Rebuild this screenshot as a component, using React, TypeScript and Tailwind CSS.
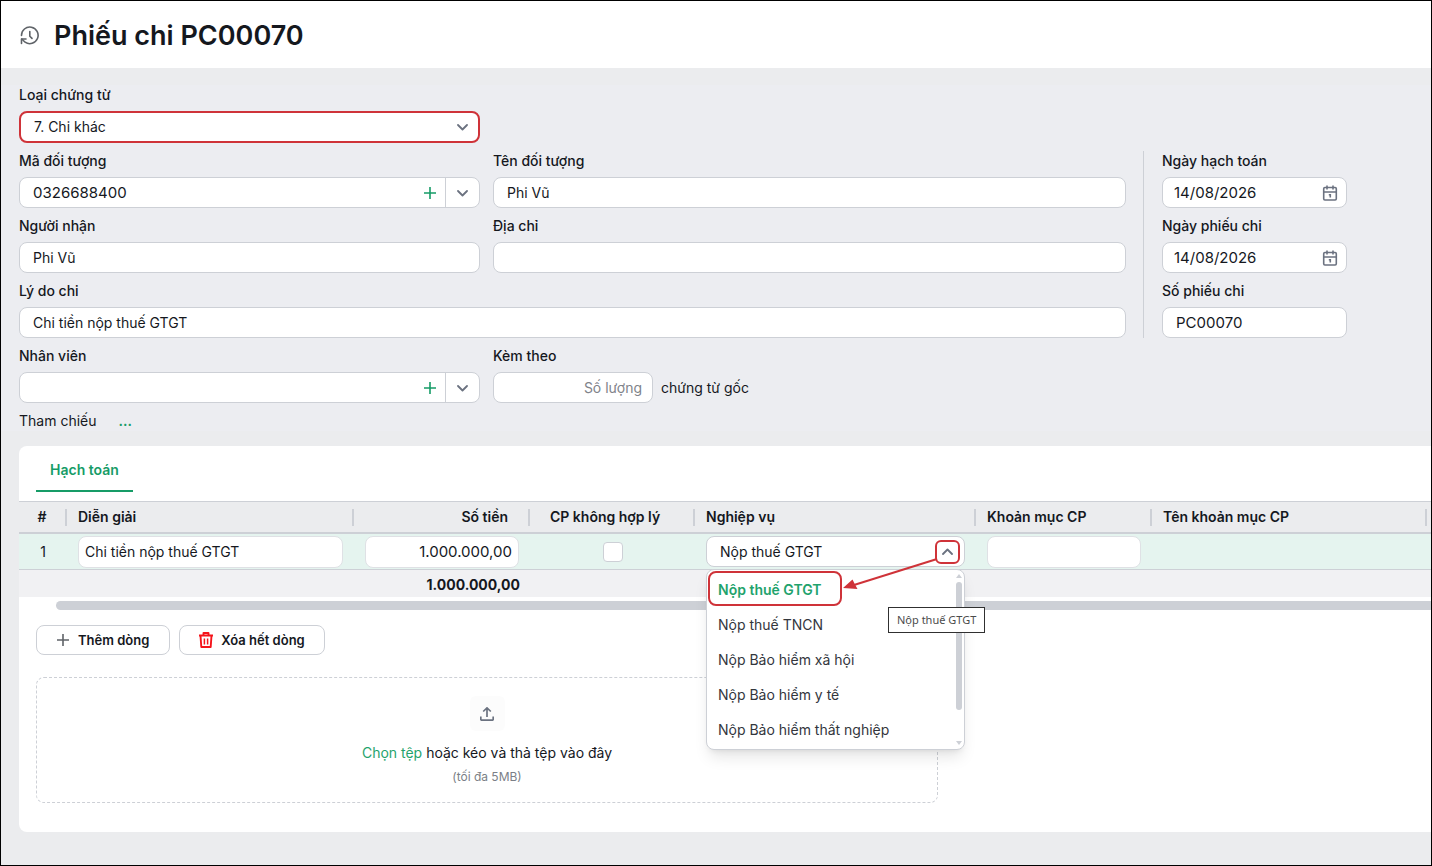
import { useState } from "react";
import type { ReactNode } from "react";
import clsx from "clsx";

const OPTIONS = [
  "Nộp thuế GTGT",
  "Nộp thuế TNCN",
  "Nộp Bảo hiểm xã hội",
  "Nộp Bảo hiểm y tế",
  "Nộp Bảo hiểm thất nghiệp",
];

const COLUMNS = [
  { label: "#", width: 48, className: "justify-center" },
  { label: "Diễn giải", width: 287, className: "pl-[11px]" },
  { label: "Số tiền", width: 176, className: "justify-end pr-5" },
  { label: "CP không hợp lý", width: 165, className: "pl-5" },
  { label: "Nghiệp vụ", width: 281, className: "pl-[11px]" },
  { label: "Khoản mục CP", width: 176, className: "pl-[11px]" },
  { label: "Tên khoản mục CP", width: 275, className: "pl-[11px]" },
];

const box = "h-[31px] w-full rounded-lg border border-[#cdd0d6] bg-white";
const cellBox = "block h-8 w-full rounded-lg border border-[#dfe1e5] bg-white";

function HistoryIcon() {
  return (
    <svg width="20" height="20" viewBox="0 0 20 20" fill="none" stroke="#5f6368" strokeWidth="1.6" strokeLinecap="round" strokeLinejoin="round">
      <path d="M1.500 9.500a8.300 8.300 0 1 1 3.600 6.700L1.800 13" />
      <path d="M1.500 17.500V13h4.500" />
      <path d="M9.800 5.500v4.700l2.200 2.200" />
    </svg>
  );
}

function Chevron({ up = false }: { up?: boolean }) {
  return (
    <svg width="12" height="12" viewBox="0 0 12 12" fill="none" stroke="#6b7280" strokeWidth="1.8" strokeLinecap="round" strokeLinejoin="round">
      <path d={up ? "M1 8 5.500 3.500 10 8" : "M1 4l4.500 4.500L10 4"} />
    </svg>
  );
}

function Plus({ color }: { color: string }) {
  return (
    <svg width="12" height="12" viewBox="0 0 12 12" fill="none" stroke={color} strokeWidth="1.6">
      <path d="M6 0v12M0 6h12" />
    </svg>
  );
}

function CalendarIcon() {
  return (
    <svg width="16" height="16" viewBox="0 0 16 16" fill="none" stroke="#6b7280" strokeWidth="1.6">
      <rect x="1.7" y="2.5" width="12.600" height="12.500" rx="1.200" />
      <path d="M1.700 7h12.600M5 .5v4M11 .5v4" />
      <path d="M6.800 9.800h1.500v2.700" />
    </svg>
  );
}

function Field({ id, label, children }: { id: string; label: string; children: ReactNode }) {
  return (
    <div className="flex flex-col gap-1.5">
      <label htmlFor={id} className="h-5 leading-5 font-medium">
        {label}
      </label>
      {children}
    </div>
  );
}

function LookupField({ id, label, value }: { id: string; label: string; value: string }) {
  return (
    <Field id={id} label={label}>
      <div className={clsx(box, "flex items-stretch")}>
        <input id={id} defaultValue={value} className="min-w-0 flex-1 rounded-l-lg pl-[13px] text-[15px] outline-none" />
        <button type="button" aria-label="Thêm mới" className="flex w-[30px] items-center justify-center">
          <Plus color="#169c67" />
        </button>
        <button type="button" aria-label="Mở danh sách" className="flex w-[34px] items-center justify-center border-l border-[#cdd0d6]">
          <Chevron />
        </button>
      </div>
    </Field>
  );
}

function DateField({ id, label, value }: { id: string; label: string; value: string }) {
  return (
    <Field id={id} label={label}>
      <div className={clsx(box, "flex items-center")}>
        <input id={id} defaultValue={value} className="min-w-0 flex-1 pl-[11px] text-[15px] outline-none" />
        <button type="button" aria-label="Chọn ngày" className="px-2">
          <CalendarIcon />
        </button>
      </div>
    </Field>
  );
}

function BusinessSelect() {
  const [open, setOpen] = useState(true);
  const [selected, setSelected] = useState(OPTIONS[0]);

  return (
    <div className="relative">
      <div className="flex h-[31px] items-center rounded-lg border border-[#cdd0d6] bg-white pr-1">
        <input
          role="combobox"
          aria-label="Nghiệp vụ"
          aria-expanded={open}
          aria-controls="business-list"
          readOnly
          value={selected}
          className="min-w-0 flex-1 pl-[13px] outline-none"
        />
        <button
          type="button"
          aria-label="Mở danh sách nghiệp vụ"
          onClick={() => setOpen(!open)}
          className="flex h-6 w-[25px] items-center justify-center rounded-md border-2 border-[#cf3339]"
        >
          <Chevron up={open} />
        </button>
      </div>
      {open && (
        <div className="absolute inset-x-0 top-full z-10 mt-0.5 flex rounded-lg border border-[#cdd0d6] bg-white shadow-lg">
          <ul id="business-list" role="listbox" className="flex-1 pt-0.5 pb-0.5">
            {OPTIONS.map((option) => (
              <li
                key={option}
                role="option"
                aria-selected={option === selected}
                onClick={() => setSelected(option)}
                className={clsx(
                  "flex h-[35px] cursor-pointer items-center pl-[11px]",
                  option === selected ? "font-semibold text-[#1fa36d]" : "text-[#33363d]"
                )}
              >
                {option}
              </li>
            ))}
          </ul>
          <div className="flex w-2.5 flex-col items-center pt-1 pb-1">
            <svg width="6" height="4" viewBox="0 0 6 4" fill="#cdd0d6">
              <path d="M3 0l3 4H0z" />
            </svg>
            <div className="mt-1 h-32 w-1.5 rounded-full bg-[#cdd0d6]" />
            <svg className="mt-auto" width="6" height="4" viewBox="0 0 6 4" fill="#cdd0d6">
              <path d="M3 4l3-4H0z" />
            </svg>
          </div>
          <div className="pointer-events-none absolute top-px left-px h-[35px] w-[134px] rounded-lg border-2 border-[#cf3339]" />
          <svg className="pointer-events-none absolute -top-4 left-[135px]" width="100" height="40" viewBox="0 0 100 40">
            <path d="M95 5 12 31" stroke="#cf3339" strokeWidth="2" />
            <path d="M1 34 10.500 25.500 13 30.500 15.500 35z" fill="#cf3339" />
          </svg>
          <div
            role="tooltip"
            className="absolute top-[37px] left-[181px] border border-[#303030] bg-white px-2 py-1 font-['Noto_Sans',sans-serif] text-[11px] leading-4 whitespace-nowrap text-[#4b4b4b]"
          >
            {selected}
          </div>
        </div>
      )}
    </div>
  );
}

export default function App() {
  return (
    <div className="min-h-screen overflow-x-hidden border border-black bg-[#ebecee] pb-8 font-[Inter,sans-serif] text-sm text-[#15181e]">
      <header className="flex h-[67px] items-center gap-[14px] bg-white pt-0.5 pl-[19px]">
        <button type="button" aria-label="Lịch sử">
          <HistoryIcon />
        </button>
        <h1 className="text-[27px] leading-8 font-semibold">Phiếu chi PC00070</h1>
      </header>

      <form className="mt-[17px] bg-[#ecedf1] pr-[84px] pl-[18px]">
        <div className="flex gap-[17px]">
          <div className="min-w-0 flex-1 space-y-2">
            <div className="grid grid-cols-[461fr_633fr] gap-x-[13px] gap-y-2">
              <Field id="type" label="Loại chứng từ">
                <div className="relative">
                  <select
                    id="type"
                    className="block h-8 w-full appearance-none rounded-lg border-2 border-[#cf3339] bg-white pl-[13px]"
                  >
                    <option>7. Chi khác</option>
                  </select>
                  <span className="pointer-events-none absolute inset-y-0 right-[11px] flex items-center">
                    <Chevron />
                  </span>
                </div>
              </Field>
              <div />
              <LookupField id="code" label="Mã đối tượng" value="0326688400" />
              <Field id="name" label="Tên đối tượng">
                <input id="name" defaultValue="Phi Vũ" className={clsx(box, "px-[13px]")} />
              </Field>
              <Field id="receiver" label="Người nhận">
                <input id="receiver" defaultValue="Phi Vũ" className={clsx(box, "px-[13px]")} />
              </Field>
              <Field id="address" label="Địa chỉ">
                <input id="address" className={clsx(box, "px-[13px]")} />
              </Field>
            </div>
            <Field id="reason" label="Lý do chi">
              <input id="reason" defaultValue="Chi tiền nộp thuế GTGT" className={clsx(box, "px-[13px]")} />
            </Field>
            <div className="grid grid-cols-[461fr_633fr] gap-x-[13px]">
              <LookupField id="staff" label="Nhân viên" value="" />
              <Field id="attached" label="Kèm theo">
                <div className="flex items-center gap-2">
                  <div className="w-40">
                    <input id="attached" placeholder="Số lượng" className={clsx(box, "px-2.5 text-right placeholder:text-[#80838a]")} />
                  </div>
                  <span>chứng từ gốc</span>
                </div>
              </Field>
            </div>
          </div>

          <div className="mt-[66px] self-start border-l border-[#cdd0d6] pl-[18px]">
            <div className="flex w-[185px] flex-col gap-2">
              <DateField id="posted" label="Ngày hạch toán" value="14/08/2026" />
              <DateField id="issued" label="Ngày phiếu chi" value="14/08/2026" />
              <Field id="number" label="Số phiếu chi">
                <input id="number" defaultValue="PC00070" className={clsx(box, "px-[13px] text-[15px]")} />
              </Field>
            </div>
          </div>
        </div>
        <div className="mt-2 flex gap-[22px] leading-5">
          <span>Tham chiếu</span>
          <button type="button" aria-label="Chọn chứng từ tham chiếu" className="font-semibold text-[#169c67]">
            ...
          </button>
        </div>
      </form>

      <section className="mt-[15px] ml-[18px] rounded-l-lg bg-white pb-[29px]">
        <div role="tablist" className="flex h-[55px] pl-[17px]">
          <button role="tab" aria-selected="true" type="button" className="h-[46px] border-b-2 border-[#169c67] px-[14px] pt-1 font-semibold text-[#169c67]">
            Hạch toán
          </button>
        </div>

        <table className="w-full table-fixed border-separate border-spacing-0">
          <colgroup>
            {COLUMNS.map((c) => (
              <col key={c.label} style={{ width: c.width }} />
            ))}
            <col />
          </colgroup>
          <thead>
            <tr className="bg-[#ebecee]">
              {COLUMNS.map((c) => (
                <th key={c.label} className="h-[33px] border-t border-b-2 border-[#cdd0d6] p-0 font-semibold">
                  <div className={clsx("flex h-[17px] items-center border-r-2 border-[#cdd0d6]", c.className)}>{c.label}</div>
                </th>
              ))}
              <th className="border-t border-b-2 border-[#cdd0d6] p-0" />
            </tr>
          </thead>
          <tbody>
            <tr className="h-9 bg-[#e5f4ef] [&>td]:border-b [&>td]:border-[#cdd0d6] [&>td]:px-[11px] [&>td]:py-0">
              <td className="text-center">1</td>
              <td>
                <input aria-label="Diễn giải" defaultValue="Chi tiền nộp thuế GTGT" className={clsx(cellBox, "px-1.5")} />
              </td>
              <td>
                <input aria-label="Số tiền" defaultValue="1.000.000,00" className={clsx(cellBox, "px-1.5 text-right text-[15px]")} />
              </td>
              <td>
                <input
                  type="checkbox"
                  aria-label="CP không hợp lý"
                  className="mx-auto block size-5 appearance-none rounded border border-[#cdd0d6] bg-white checked:bg-[#169c67]"
                />
              </td>
              <td>
                <BusinessSelect />
              </td>
              <td>
                <input aria-label="Khoản mục CP" className={clsx(cellBox, "px-1.5")} />
              </td>
              <td />
              <td />
            </tr>
          </tbody>
          <tfoot>
            <tr className="h-[27px] bg-[#f1f1f3] font-bold">
              <td colSpan={3} className="pt-0.5 pr-2.5 pb-0 text-right">
                1.000.000,00
              </td>
              <td colSpan={5} />
            </tr>
          </tfoot>
        </table>
        <div className="mt-1 ml-[37px] h-[9px] rounded-l-full bg-[#cdd0d6]" />

        <div className="mt-[15px] flex gap-[9px] pl-[17px] text-[13px] font-semibold">
          <button type="button" className="flex h-[30px] items-center gap-[9px] rounded-lg border border-[#cdd0d6] pr-5 pl-5">
            <Plus color="#5f6368" />
            Thêm dòng
          </button>
          <button type="button" className="flex h-[30px] items-center gap-2 rounded-lg border border-[#cdd0d6] px-[19px]">
            <svg width="14" height="16" viewBox="0 0 14 16" fill="none" stroke="#f5141b" strokeWidth="1.9" strokeLinejoin="round">
              <path d="M0 3.500h14M4.500 3.500V1h5v2.500M1.500 3.500l.8 11.500h9.400l.8-11.500" />
              <path d="M5.400 6.500v6M8.600 6.500v6" strokeWidth="1.5" />
            </svg>
            Xóa hết dòng
          </button>
        </div>

        <div className="mt-[22px] mr-[493px] ml-[17px] flex flex-col items-center rounded-lg border border-dashed border-[#cdd0d6] pt-[18px] pb-[15px]">
          <div className="flex size-[35px] items-center justify-center rounded-md bg-[#fcfcfc]">
            <svg width="14" height="14" viewBox="0 0 14 14" fill="none" stroke="#6b7280" strokeWidth="1.7">
              <path d="M7 10V1M3.200 4.500 7 .9l3.800 3.600M.8 9.500v2.700q0 1 1 1h10.400q1 0 1-1V9.500" />
            </svg>
          </div>
          <p className="mt-3 leading-5">
            <button type="button" className="text-[#1fa36d]">
              Chọn tệp
            </button>{" "}
            hoặc kéo và thả tệp vào đây
          </p>
          <p className="mt-1 text-xs leading-5 text-[#7b7f87]">(tối đa 5MB)</p>
        </div>
      </section>
    </div>
  );
}
